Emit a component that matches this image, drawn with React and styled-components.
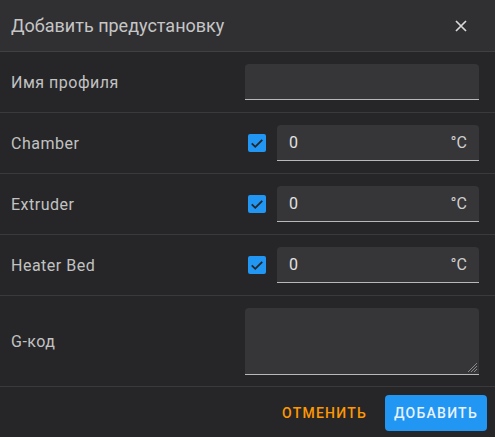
import styled, { createGlobalStyle } from "styled-components";

const GlobalStyle = createGlobalStyle`
  html, body {
    margin: 0;
    padding: 0;
    background: #262628;
  }
  body {
    font-family: Roboto, "Noto Sans", sans-serif;
    -webkit-font-smoothing: antialiased;
  }
`;

const Dialog = styled.div`
  width: 495px;
  height: 437px;
  background: #262628;
  display: flex;
  flex-direction: column;
  overflow: hidden;
`;

const Header = styled.div`
  height: 51px;
  flex: none;
  display: flex;
  align-items: center;
  justify-content: space-between;
  padding: 0 28px 0 11px;
  background: #303033;
  border-bottom: 1px solid #404043;
`;

const Title = styled.div`
  font-size: 18px;
  font-weight: 400;
  color: #c6c6c6;
`;

const CloseButton = styled.button`
  border: none;
  background: none;
  padding: 0;
  width: 12px;
  height: 12px;
  display: flex;
  color: #d8d8d8;
  cursor: pointer;
`;

const Row = styled.div`
  flex: none;
  display: flex;
  align-items: center;
  height: ${(p) => p.$height || 60}px;
  padding: 0 16px 0 11px;
  border-bottom: 1px solid #3a3a3d;
`;

const Label = styled.div`
  flex: 1;
  font-size: 16px;
  font-weight: 400;
  letter-spacing: 0.5px;
  color: #c2c2c2;
`;

const Control = styled.div`
  width: 234px;
  display: flex;
  align-items: center;
  gap: 11px;
`;

const Field = styled.div`
  flex: 1;
  height: ${(p) => p.$height || 36}px;
  display: flex;
  align-items: center;
  justify-content: space-between;
  padding: 0 12px;
  box-sizing: border-box;
  background: #363638;
  border-radius: 4px 4px 0 0;
  border-bottom: 1px solid #b8b8b8;
  font-size: 16px;
  color: #e2e2e2;
  position: relative;
`;

const Suffix = styled.span`
  color: #cfcfcf;
`;

const Checkbox = styled.div`
  width: 18px;
  height: 18px;
  margin-left: 3px;
  flex: none;
  border-radius: 2px;
  background: #2196f3;
  display: flex;
  align-items: center;
  justify-content: center;
`;

const Grip = styled.svg`
  position: absolute;
  right: 1px;
  bottom: 1px;
`;

const Footer = styled.div`
  flex: none;
  display: flex;
  align-items: flex-start;
  justify-content: flex-end;
  gap: 8px;
  padding: 8px;
`;

const Button = styled.button`
  height: 36px;
  padding: 0 ${(p) => (p.$primary ? 9 : 10)}px;
  border: none;
  border-radius: 4px;
  font-family: Roboto, sans-serif;
  font-size: 14px;
  font-weight: 500;
  letter-spacing: 0.089em;
  text-transform: uppercase;
  background: ${(p) => (p.$primary ? "#2196f3" : "transparent")};
  color: ${(p) => (p.$primary ? "#e8f2fc" : "#ff9800")};
  cursor: pointer;
`;

const Check = () => (
  <svg width="14" height="14" viewBox="0 0 24 24">
    <path d="M3 12.5l6 6L21 6.5" fill="none" stroke="#262628" strokeWidth="3.2" />
  </svg>
);

const heaters = ["Chamber", "Extruder", "Heater Bed"];

export default function App() {
  return (
    <Dialog>
      <GlobalStyle />
      <Header>
        <Title>Добавить предустановку</Title>
        <CloseButton aria-label="close">
          <svg width="12" height="12" viewBox="0 0 12 12">
            <path d="M1 1l10 10M11 1L1 11" stroke="currentColor" strokeWidth="1.7" />
          </svg>
        </CloseButton>
      </Header>
      <Row>
        <Label>Имя профиля</Label>
        <Control>
          <Field />
        </Control>
      </Row>
      {heaters.map((name) => (
        <Row key={name}>
          <Label>{name}</Label>
          <Control>
            <Checkbox>
              <Check />
            </Checkbox>
            <Field>
              <span>0</span>
              <Suffix>°C</Suffix>
            </Field>
          </Control>
        </Row>
      ))}
      <Row $height={90}>
        <Label>G-код</Label>
        <Control>
          <Field $height={67}>
            <Grip width="12" height="12" viewBox="0 0 12 12">
              <path d="M11 2L2 11M11 5L5 11M11 8L8 11" stroke="#8a8a8a" strokeWidth="1" />
            </Grip>
          </Field>
        </Control>
      </Row>
      <Footer>
        <Button>Отменить</Button>
        <Button $primary>Добавить</Button>
      </Footer>
    </Dialog>
  );
}
